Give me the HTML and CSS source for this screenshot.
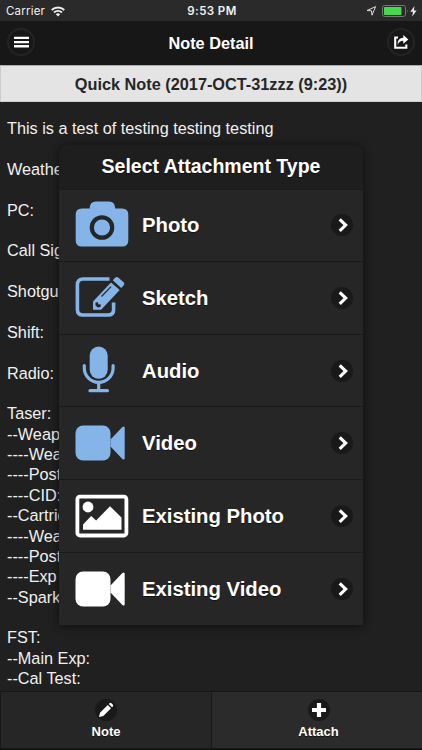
FILE: index.html
```html
<!DOCTYPE html>
<html lang="en">
<head>
    <meta charset="UTF-8">
    <meta name="viewport" content="width=device-width, initial-scale=1.0">
    <title>Note Detail</title>
    <link rel="stylesheet" href="styles.css">
</head>
<body>
    <!-- Shared icons -->
    <svg class="defs" width="0" height="0">
        <symbol id="chevron" viewBox="0 0 22 22">
            <circle cx="11" cy="11" r="11" fill="#191919"/>
            <path d="M8.7 5.3l6 5.8-6 5.8" fill="none" stroke="#fff" stroke-width="3.1"/>
        </symbol>
        <symbol id="video" viewBox="0 0 54 36">
            <rect x="0.5" y="0.5" width="35" height="35" rx="7.5"/>
            <path d="M35.5 14.5L47.4 2q2.3-1.6 2.3 1v30q0 2.6-2.3 1L35.5 21.5z"/>
        </symbol>
    </svg>

    <div class="page">
        <div class="status-bar">
            <div class="status-left">
                <span>Carrier</span>
                <svg width="14" height="11" viewBox="0 0 14 11" fill="none" stroke="#eee" stroke-width="1.9">
                    <path d="M0.7 4a9 9 0 0 1 12.6 0M3 6.5a5.8 5.8 0 0 1 8 0"/>
                    <path d="M4.8 8.2a3.3 3.3 0 0 1 4.4 0L7 10.5z" fill="#eee" stroke="none"/>
                </svg>
            </div>
            <div class="status-time">9:53 PM</div>
            <div class="status-right">
                <svg width="52" height="12" viewBox="0 0 52 12">
                    <path d="M1 5.5L9.6 1.6 6 10.2 5.5 5.8z" fill="none" stroke="#ddd" stroke-width="1"/>
                    <rect x="16.5" y="0.5" width="23" height="11" rx="2.2" fill="none" stroke="#777"/>
                    <rect x="18" y="2" width="17.5" height="8" rx="0.8" fill="#47d84f"/>
                    <path d="M41 4.3q1.4 1.7 0 3.4z" fill="#777"/>
                    <path d="M48.5 1l-4.2 5.8h2.7l-0.8 4.6 4.4-6h-2.8z" fill="#eee"/>
                </svg>
            </div>
        </div>

        <div class="header">
            <button class="round-button" aria-label="Menu">
                <svg width="15" height="12" viewBox="0 0 15 12" fill="#fff">
                    <path d="M0 0.7h15v2.3H0zM0 4.9h15v2.3H0zM0 9.1h15v2.3H0z"/>
                </svg>
            </button>
            <h1>Note Detail</h1>
            <button class="round-button" aria-label="Share">
                <svg width="16" height="16" viewBox="0 0 16 16">
                    <path d="M5 3.5H2.2v10.3h11.1V10.5" fill="none" stroke="#fff" stroke-width="2.1"/>
                    <path d="M4.6 10.7C4.7 5.8 6.8 4 10.3 3.8V1l5 4.4-5 4.4V6.8C7.6 6.9 5.8 8 4.6 10.7z" fill="#fff"/>
                </svg>
            </button>
        </div>

        <div class="note-title">Quick Note (2017-OCT-31zzz (9:23))</div>

        <div class="note-text">This is a test of testing testing testing

Weather:

PC:

Call Sign:

Shotgun:

Shift:

Radio:

Taser:
--Weapon:
----Weapon:
----Post:
----CID:
--Cartridge:
----Weapon:
----Post:
----Exp
--Spark:

FST:
--Main Exp:
--Cal Test:</div>

        <div class="footer">
            <div class="tab">
                <svg width="22" height="22" viewBox="0 0 22 22">
                    <circle cx="11" cy="11" r="11" fill="#191919"/>
                    <path d="M4 18l1-4.3 7.8-7.7 3.2 3.2-7.7 7.8zM13.8 5.1l1-1q0.8-0.6 1.6 0.1l1.5 1.5q0.7 0.8 0.1 1.6l-1 1z" fill="#fff"/>
                </svg>
                <span>Note</span>
            </div>
            <div class="tab tab-attach">
                <svg width="22" height="22" viewBox="0 0 22 22">
                    <circle cx="11" cy="11" r="11" fill="#191919"/>
                    <path d="M8.9 4h4.2v4.9H18v4.2h-4.9V18H8.9v-4.9H4V8.9h4.9z" fill="#fff"/>
                </svg>
                <span>Attach</span>
            </div>
        </div>
    </div>

    <div class="popup">
        <h2>Select Attachment Type</h2>
        <ul>
            <li>
                <svg class="icon" width="54" height="48" viewBox="0 0 54 48">
                    <path d="M7 7.5h7.5q0.3-7 6.5-7h13q6 0 6.3 7H47q6.3 0 6.3 6v26q0 6-6.3 6H7q-6.3 0-6.3-6v-26q0-6 6.3-6z"/>
                    <circle cx="27" cy="26.5" r="10.2" fill="none" stroke="#262626" stroke-width="4.2"/>
                </svg>
                <span>Photo</span>
                <svg class="arrow"><use href="#chevron"/></svg>
            </li>
            <li>
                <svg class="icon" width="54" height="48" viewBox="0 0 54 48">
                    <path d="M34.5 5H8q-5.6 0-5.6 5.6v24.8Q2.4 41 8 41h25q5.6 0 5.6-5.6V28.5" fill="none" stroke="#85b5e8" stroke-width="3.6"/>
                    <path d="M18 27.5L36 8.5l8.7 7.5-18.6 19.7H18z"/>
                    <path d="M37.8 6.3l2.3-2.5q1.7-1.6 3.4 0l5.1 4.4q1.6 1.6 0 3.3l-2.4 2.6z"/>
                    <path d="M26.5 22.5L36 12.7" stroke="#262626" stroke-width="1.2"/>
                    <path d="M20.5 28.5l2.5-0.3 0.3 2 2.6 0.2-0.4 2.5-2.8 0.7-2.2-2.2z" fill="#262626"/>
                </svg>
                <span>Sketch</span>
                <svg class="arrow"><use href="#chevron"/></svg>
            </li>
            <li>
                <svg class="icon icon-audio" width="54" height="48" viewBox="0 0 54 48">
                    <rect x="14.7" y="0.5" width="18" height="32.3" rx="9"/>
                    <path d="M9.3 19.5v2.5a14.4 14.4 0 0 0 28.8 0v-2.5M23.7 36.5V44M15 44.7h17.4" fill="none" stroke="#85b5e8" stroke-width="3.2" stroke-linecap="round"/>
                </svg>
                <span>Audio</span>
                <svg class="arrow"><use href="#chevron"/></svg>
            </li>
            <li>
                <svg class="icon" width="54" height="36"><use href="#video"/></svg>
                <span>Video</span>
                <svg class="arrow"><use href="#chevron"/></svg>
            </li>
            <li>
                <svg class="icon white" width="54" height="48" viewBox="0 0 54 48">
                    <rect x="2.4" y="4.7" width="49" height="38.8" rx="2.5" fill="none" stroke="#fff" stroke-width="3.8"/>
                    <circle cx="13" cy="15" r="5.4"/>
                    <path d="M8 37.7v-5.2l8.2-8.5 4.9 4.5L35 14.2l11.5 11.3v12.2z"/>
                </svg>
                <span>Existing Photo</span>
                <svg class="arrow"><use href="#chevron"/></svg>
            </li>
            <li>
                <svg class="icon white" width="54" height="36"><use href="#video"/></svg>
                <span>Existing Video</span>
                <svg class="arrow"><use href="#chevron"/></svg>
            </li>
        </ul>
    </div>
</body>
</html>
```
FILE: styles.css
```css
* {
    box-sizing: border-box;
}

body {
    margin: 0;
    background: #202020;
    color: #f0f0f0;
    font-family: "Liberation Sans", Arial, sans-serif;
    overflow: hidden;
}

.defs {
    position: absolute;
}

.page {
    display: flex;
    flex-direction: column;
    height: 750px;
}

/* Status bar */
.status-bar {
    display: grid;
    grid-template-columns: 1fr auto 1fr;
    align-items: center;
    height: 21px;
    padding: 1px 4px 0 6px;
    background: #2a2a2a;
    font-family: Inter, sans-serif;
    font-size: 11.5px;
}

.status-left {
    display: flex;
    align-items: center;
    gap: 6px;
    letter-spacing: 0.2px;
}

.status-time {
    font-weight: 600;
    letter-spacing: 0.4px;
}

.status-right {
    display: flex;
    justify-content: flex-end;
}

/* Header */
.header {
    display: flex;
    align-items: center;
    justify-content: space-between;
    height: 44px;
    padding: 0 7px 2px;
    background: #171717;
}

.header h1 {
    margin: 3px 0 0;
    font-size: 16.3px;
    color: #fff;
}

.round-button {
    display: flex;
    align-items: center;
    justify-content: center;
    width: 28px;
    height: 28px;
    padding: 0;
    border: 2px solid #242424;
    border-radius: 50%;
    background: #171717;
}

.note-title {
    height: 37px;
    border: 1px solid #ccc;
    border-top-color: #aaa;
    background: #e4e4e4;
    color: #262626;
    font-size: 16.3px;
    font-weight: bold;
    line-height: 36px;
    text-align: center;
}

.note-text {
    flex: 1;
    padding: 16px 7px 0;
    font-size: 16.25px;
    line-height: 20.37px;
    white-space: pre;
}

/* Bottom tabs */
.footer {
    display: grid;
    grid-template-columns: 1fr 1fr;
    height: 59px;
    border-top: 1px solid #171717;
    border-bottom: 1px solid #111;
}

.tab {
    display: flex;
    flex-direction: column;
    align-items: center;
    padding-top: 7px;
    border: 1px solid #171717;
    border-width: 0 0 1px 1px;
    background: #262626;
    color: #fff;
    font-size: 13px;
    font-weight: bold;
    line-height: 21px;
    text-shadow: 0 1px 0 #111;
}

.tab-attach {
    padding-left: 3px;
    background: #2b2b2b;
}

/* Popup */
.popup {
    position: absolute;
    top: 145px;
    left: 59px;
    width: 304px;
    height: 479.5px;
    border-radius: 9px 9px 0 0;
    background: #262626;
    box-shadow: 0 1px 10px rgba(0, 0, 0, 0.6);
    color: #fff;
    text-shadow: 0 1px 0 #111;
}

.popup h2 {
    height: 43.5px;
    margin: 0;
    border-radius: 9px 9px 0 0;
    background: #1e1e1e;
    font-size: 19.5px;
    line-height: 43px;
    text-align: center;
}

.popup ul {
    margin: 0;
    padding: 0;
    list-style: none;
}

.popup li {
    display: flex;
    align-items: center;
    height: 72.67px;
    padding: 0 10px 0 16px;
    border-top: 1px solid #1a1a1a;
    font-size: 20.3px;
    font-weight: bold;
}

.popup li span {
    flex: 1;
    margin-left: 13px;
    padding-top: 1px;
}

.icon {
    fill: #85b5e8;
}

.icon-audio {
    margin-bottom: 2px;
}

.icon.white {
    fill: #fff;
}

.arrow {
    width: 22px;
    height: 22px;
}
```
